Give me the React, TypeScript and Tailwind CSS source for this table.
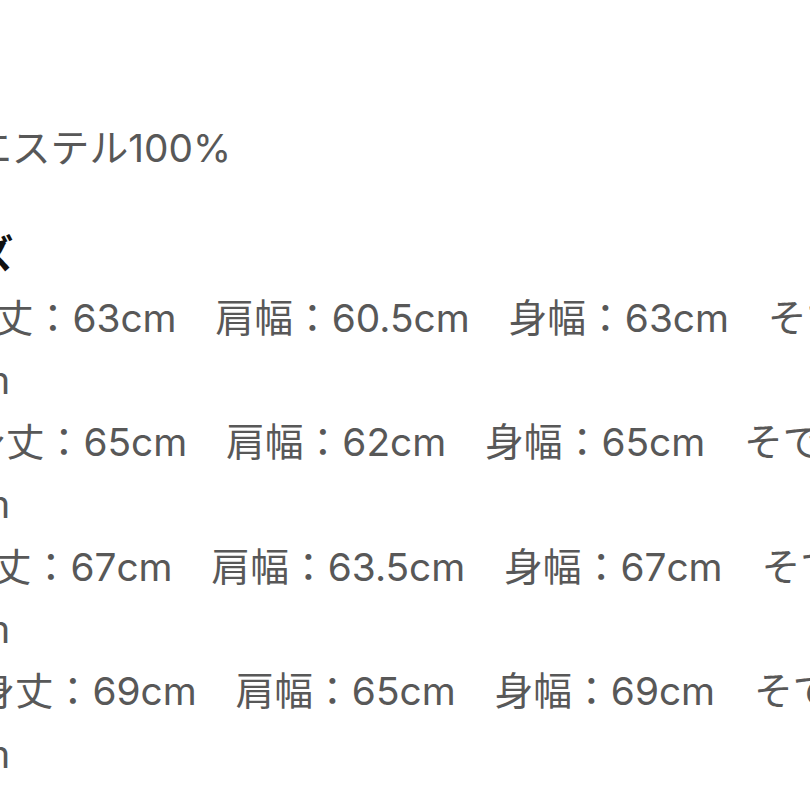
const rows = [
  { text: "身丈：63cm　肩幅：60.5cm　身幅：63cm　そで丈", cls: "ml-[-44px]" },
  { text: "cm", cls: "ml-[-46px]" },
  { text: "身丈：65cm　肩幅：62cm　身幅：65cm　そで丈", cls: "ml-[-33px]" },
  { text: "cm", cls: "ml-[-46px]" },
  { text: "身丈：67cm　肩幅：63.5cm　身幅：67cm　そで丈", cls: "ml-[-46px]" },
  { text: "cm", cls: "ml-[-46px]" },
  { text: "身丈：69cm　肩幅：65cm　身幅：69cm　そで丈", cls: "ml-[-24px]" },
  { text: "cm", cls: "ml-[-46px]" },
];

export default function App() {
  return (
    <div className="w-[810px] h-[810px] bg-white overflow-hidden">
      <div className="flex flex-col pt-[117px] text-[38.8px] leading-[62.3px] text-[#585858] font-['Inter','Noto_Sans_CJK_JP',sans-serif] whitespace-nowrap">
        <div className="ml-[-221px]">素材：ポリエステル100%</div>
        <div className="ml-[-102px] mt-[44px] font-bold text-[#111]">サイズ</div>
        <div className="flex flex-col mt-[1px]">
          {rows.map((r, i) => (
            <div key={i} className={r.cls}>
              {r.text}
            </div>
          ))}
        </div>
      </div>
    </div>
  );
}
